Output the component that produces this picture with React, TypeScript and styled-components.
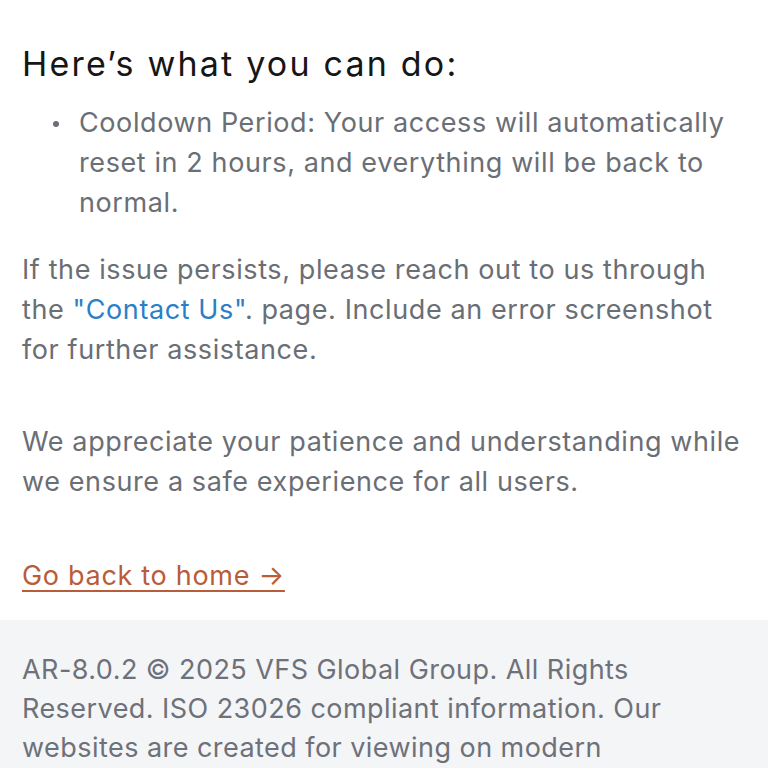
import React from "react";
import styled, { createGlobalStyle } from "styled-components";

const Global = createGlobalStyle`
  html, body { margin: 0; padding: 0; background: #ffffff; }
  body { font-family: Inter, "Noto Sans", sans-serif; -webkit-font-smoothing: antialiased; }
`;

const Page = styled.div`
  display: flex;
  flex-direction: column;
  width: 768px;
  height: 768px;
  overflow: hidden;
`;

const Main = styled.main`
  display: flex;
  flex-direction: column;
  padding: 42px 20px 24px 22px;
`;

const Heading = styled.h2`
  margin: 0;
  font-size: 34px;
  font-weight: 400;
  line-height: 44px;
  color: #161616;
  letter-spacing: 2.2px;
`;

const List = styled.ul`
  margin: 17px 0 0 0;
  padding: 0;
  list-style: none;
`;

const Item = styled.li`
  display: flex;
  align-items: flex-start;
  font-size: 27px;
  line-height: 40px;
  letter-spacing: 0.6px;
  color: #6a6e75;
`;

const Dot = styled.span`
  flex: none;
  width: 6px;
  height: 6px;
  border-radius: 50%;
  background: #6a6e75;
  margin: 18px 20px 0 31px;
`;

const Para = styled.p<{ $gap: number }>`
  margin: ${(p) => p.$gap}px 0 0 0;
  font-size: 27px;
  line-height: 40px;
  letter-spacing: 0.6px;
  color: #6a6e75;
`;

const Contact = styled.a`
  color: #2a7fc6;
  text-decoration: none;
`;

const HomeLink = styled.a`
  margin-top: 54px;
  align-self: flex-start;
  font-size: 27px;
  line-height: 40px;
  letter-spacing: 0.7px;
  color: #b85c3a;
  text-decoration: underline;
  text-decoration-thickness: 2px;
  text-underline-offset: 5px;
`;

const Footer = styled.footer`
  flex: 1;
  background: #f4f5f7;
  padding: 30px 44px 0 22px;
`;

const FooterText = styled.p`
  margin: 0;
  font-size: 27px;
  line-height: 39px;
  letter-spacing: 0.45px;
  color: #6e7179;
`;

export default function App() {
  return (
    <Page>
      <Global />
      <Main>
        <Heading>Here’s what you can do:</Heading>
        <List>
          <Item>
            <Dot />
            <span>
              Cooldown Period: Your access will automatically reset in 2 hours, and everything will be back to normal.
            </span>
          </Item>
        </List>
        <Para $gap={27}>
          If the issue persists, please reach out to us through the <Contact href="#">"Contact Us"</Contact>. page. Include an error screenshot for further assistance.
        </Para>
        <Para $gap={52}>
          We appreciate your patience and understanding while we ensure a safe experience for all users.
        </Para>
        <HomeLink href="#">Go back to home →</HomeLink>
      </Main>
      <Footer>
        <FooterText>
          AR-8.0.2 © 2025 VFS Global Group. All Rights Reserved. ISO 23026 compliant information. Our websites are created for viewing on modern browsers.
        </FooterText>
      </Footer>
    </Page>
  );
}
